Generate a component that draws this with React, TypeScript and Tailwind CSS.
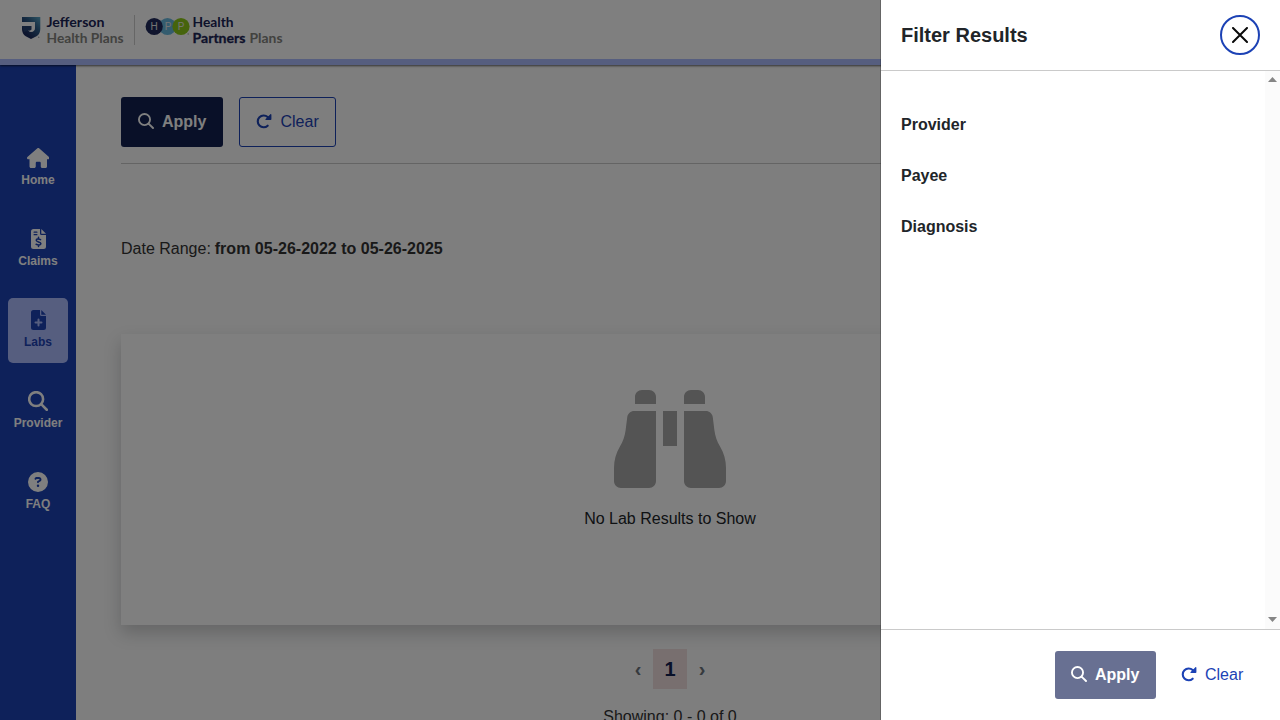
import React from "react";
import { FaHouse, FaCircleQuestion, FaBinoculars } from "react-icons/fa6";

function SearchIcon({ className, stroke = 60 }: { className?: string; stroke?: number }) {
  return (
    <svg viewBox="0 0 512 512" fill="none" stroke="currentColor" strokeWidth={stroke} strokeLinecap="round" className={className}>
      <circle cx="208" cy="208" r="178" />
      <path d="M338 338L480 480" />
    </svg>
  );
}

function RotateIcon({ className }: { className?: string }) {
  return (
    <svg viewBox="0 0 16 16" className={className}>
      <path d="M11.700 11.700A5.900 5.900 0 1 1 11.700 3.100L13 4.500" fill="none" stroke="currentColor" strokeWidth="2.100" strokeLinecap="round" />
      <path d="M14.400.300c.4-.4 1-.1 1 .4v4.600c0 .4-.3.800-.8.800H10c-.5 0-.8-.6-.4-1z" fill="currentColor" />
    </svg>
  );
}

function FilePage({ children }: { children: React.ReactNode }) {
  return (
    <svg width="16" height="20" viewBox="-1 0 16 20">
      <path d="M2.500 0H9V4.500Q9 6 10.500 6H15V17.500Q15 20 12.500 20H2.500Q0 20 0 17.500V2.500Q0 0 2.500 0ZM10.300 0L15 4.800H10.300Z" fill="currentColor" />
      {children}
    </svg>
  );
}

function InvoiceIcon() {
  return (
    <FilePage>
      <g fill="none" stroke="#1c42b5" strokeWidth="1.250" strokeLinecap="round">
        <path d="M3.100 3.200H5.900M3.100 5.700H5.900" />
        <path d="M9.600 10.600C7.500 9.700 5.200 9.800 5.200 11.300C5.200 13.300 9.900 12.500 9.900 14.600C9.900 16.300 7.200 16.200 5.100 15.300M7.500 8.300V9.800M7.500 16V17.400" strokeWidth="1.500" />
      </g>
    </FilePage>
  );
}

function MedicalIcon() {
  return (
    <FilePage>
      <path d="M7.500 9.500V15.500M4.500 12.500H10.500" fill="none" stroke="#adbdff" strokeWidth="2" strokeLinecap="round" />
    </FilePage>
  );
}

function Logo() {
  return (
    <svg width="290" height="58" viewBox="0 0 290 58" className="block font-['Lato','Noto_Sans',sans-serif]">
      <defs>
        <linearGradient id="shield" x1="1" y1="0" x2="0.3" y2="0.8">
          <stop offset="0" stopColor="#5aa8c8" />
          <stop offset="0.5" stopColor="#2d5c88" />
          <stop offset="1" stopColor="#1b2a5c" />
        </linearGradient>
      </defs>
      <path d="M22 17H40.300V29Q40.300 34 36.500 36.200L31 39L25.700 36.200Q22 34 22 29V26H28V29Q28 31.700 31 32Q35 31.700 35 28V22H22Z" fill="url(#shield)" />
      <path d="M22 26H31.500V29.500Q30.800 31 28 30.500L24 32Z" fill="#25406f" />
      <circle cx="38.700" cy="37.200" r=".8" fill="#aaa" />
      <g fontSize="14" fontWeight="700">
        <text x="46.500" y="27" fill="#1b2456" textLength="58" lengthAdjust="spacingAndGlyphs">Jefferson</text>
        <text x="46.500" y="43" fill="#84847e" textLength="77" lengthAdjust="spacingAndGlyphs">Health Plans</text>
        <text x="192.500" y="27" fill="#1b2456" textLength="41" lengthAdjust="spacingAndGlyphs">Health</text>
        <text x="192.500" y="43" fill="#1b2456" stroke="#1b2456" strokeWidth=".3" textLength="53" lengthAdjust="spacingAndGlyphs">Partners</text>
        <text x="249.500" y="43" fill="#84847e" textLength="33" lengthAdjust="spacingAndGlyphs">Plans</text>
      </g>
      <path d="M134.500 15V45" stroke="#ccc" />
      <circle cx="167.500" cy="26.500" r="8.600" fill="#69b9de" />
      <circle cx="154.200" cy="26.500" r="8.600" fill="#202a5c" />
      <circle cx="181" cy="26.500" r="8.600" fill="#8dc919" />
      <circle cx="188.200" cy="34" r=".8" fill="#aaa" />
      <g fontSize="10" fontWeight="400" fill="#e8e8e8" textAnchor="middle" className="font-['Liberation_Sans',sans-serif]">
        <text x="154" y="30">H</text>
        <text x="168" y="30">P</text>
        <text x="181" y="30">P</text>
      </g>
    </svg>
  );
}

function NavItem({ label, active, children }: { label: string; active?: boolean; children: React.ReactNode }) {
  return (
    <a className={"flex h-[65px] w-[60px] flex-col items-center rounded-[5px] pt-3 text-xs font-bold leading-[18px] " + (active ? "bg-[#adbdff] text-[#1c42b5]" : "text-white")}>
      <span className="flex h-5 items-center text-xl">{children}</span>
      <span className="mt-[3px]">{label}</span>
    </a>
  );
}

export default function App() {
  return (
    <div className="relative h-[720px] w-[1280px] overflow-hidden bg-[#fcfcfc] font-['Liberation_Sans',Arial,sans-serif] text-base text-[#212529]">
      <div className="flex h-full flex-col">
        <header className="relative z-10 h-[65px] shrink-0 border-b-[6px] border-[#adbdff] bg-white shadow-[0_1px_2px_rgba(0,0,0,0.6)]">
          <Logo />
        </header>
        <div className="flex min-h-0 flex-1">
          <nav className="flex w-[76px] shrink-0 flex-col items-center gap-4 bg-[#1c42b5] pt-[71px]">
            <NavItem label="Home"><FaHouse className="h-5 w-[22.500px]" /></NavItem>
            <NavItem label="Claims"><InvoiceIcon /></NavItem>
            <NavItem label="Labs" active><MedicalIcon /></NavItem>
            <NavItem label="Provider"><SearchIcon className="size-5" stroke={66} /></NavItem>
            <NavItem label="FAQ"><FaCircleQuestion /></NavItem>
          </nav>
          <main className="flex flex-1 flex-col px-[45px] pt-8">
            <div className="w-[1098px]">
              <div className="flex gap-4 border-b border-[#c8c8c8] pb-4">
                <button className="flex h-[50px] w-[102px] items-center rounded-[3px] bg-[#122051] pl-[17px] font-bold text-white">
                  <SearchIcon className="mb-0.5 mr-2 size-4" />Apply
                </button>
                <button className="flex h-[50px] w-[97px] items-center rounded-[3px] border border-[#1c42b5] pl-4 text-[#1c42b5]">
                  <RotateIcon className="mr-[8.500px] size-4" />Clear
                </button>
              </div>
              <p className="mt-[73px] leading-6 text-[#333]">Date Range: <b className="-ml-[0.500px] tracking-[0.01px]">from 05-26-2022 to 05-26-2025</b></p>
              <section className="mt-[73px] flex h-[291px] flex-col items-center bg-white pt-[49px] shadow-[0_8px_16px_rgba(33,37,41,0.22)]">
                <FaBinoculars className="size-28 text-[#a8a8a8]" />
                <p className="mt-3 leading-6">No Lab Results to Show</p>
              </section>
              <div className="mt-6 flex h-10 items-center justify-center text-lg font-bold leading-10 text-[#6c757d]">
                <span className="w-[30px] text-center text-xl leading-10">‹</span>
                <span className="h-10 w-[34px] bg-[#f0dedf] text-center text-xl leading-10 text-[#122051]">1</span>
                <span className="w-[30px] text-center text-xl leading-10">›</span>
              </div>
              <p className="mt-4 text-center leading-6 text-[#333]">Showing: 0 - 0 of 0</p>
            </div>
          </main>
        </div>
      </div>
      <div className="absolute inset-0 z-20 bg-black/50" />
      <aside className="absolute inset-y-0 right-0 z-30 flex w-[400px] flex-col border-l border-black/20 bg-white bg-clip-padding">
        <div className="flex h-[71px] shrink-0 items-center justify-between border-b border-[#cacaca] px-5">
          <h2 className="text-xl font-bold leading-[30px]">Filter Results</h2>
          <button className="flex size-10 items-center justify-center rounded-full border-2 border-[#1c42b5]">
            <svg viewBox="0 0 16 16" className="size-4 text-[#0a0a0a]" fill="none" stroke="currentColor" strokeWidth="2" strokeLinecap="round"><path d="M1 1L15 15M15 1L1 15" /></svg>
          </button>
        </div>
        <div className="flex min-h-0 flex-1">
          <div className="flex flex-1 flex-col gap-[27px] px-5 pt-[42px] font-bold leading-6">
            <h3>Provider</h3>
            <h3>Payee</h3>
            <h3>Diagnosis</h3>
          </div>
          <div className="flex w-[15px] flex-col items-center justify-between bg-[#fbfbfb] pb-[7px] pt-1.5">
            <svg width="9" height="5" viewBox="0 0 9 5" fill="#858585"><path d="M0 5L4.500 0L9 5Z" /></svg>
            <svg width="9" height="5" viewBox="0 0 9 5" fill="#858585"><path d="M0 0L4.500 5L9 0Z" /></svg>
          </div>
        </div>
        <div className="flex h-[91px] shrink-0 items-center justify-end border-t border-[#cacaca] pr-5">
          <button className="mr-2.5 flex h-12 w-[101px] items-center rounded-[3px] bg-[#687092] pl-4 font-bold text-white">
            <SearchIcon className="mb-0.5 mr-2 size-4" />Apply
          </button>
          <button className="flex h-12 w-[94px] items-center pl-[15px] text-[#1c42b5]">
            <RotateIcon className="mr-2 size-4" />Clear
          </button>
        </div>
      </aside>
    </div>
  );
}
